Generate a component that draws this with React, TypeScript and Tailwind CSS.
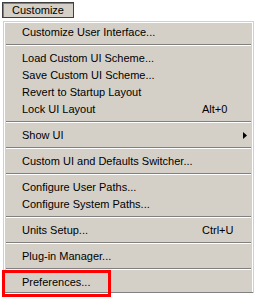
import React from "react"

type Entry = { label?: string; shortcut?: string; sub?: boolean; sep?: boolean }

const entries: Entry[] = [
    { label: "Customize User Interface..." },
    { sep: true },
    { label: "Load Custom UI Scheme..." },
    { label: "Save Custom UI Scheme..." },
    { label: "Revert to Startup Layout" },
    { label: "Lock UI Layout", shortcut: "Alt+0" },
    { sep: true },
    { label: "Show UI", sub: true },
    { sep: true },
    { label: "Custom UI and Defaults Switcher..." },
    { sep: true },
    { label: "Configure User Paths..." },
    { label: "Configure System Paths..." },
    { sep: true },
    { label: "Units Setup...", shortcut: "Ctrl+U" },
    { sep: true },
    { label: "Plug-in Manager..." },
    { sep: true },
    { label: "Preferences..." },
]

const App = () => {
    return (
        <div
            className="relative w-[254px] h-[297px] bg-white overflow-hidden text-[11px] text-black"
            style={{ fontFamily: '"Liberation Sans", Arial, sans-serif' }}
        >
            {/* pressed menu button */}
            <div className="ml-[2px] mt-[2px] w-[72px] h-[16px] border border-[#404040] bg-[#d4d0c8] shadow-[inset_1px_1px_0_#808080] flex items-center justify-center leading-none">
                Customize
            </div>

            {/* dropdown */}
            <div className="ml-[3px] mt-[3px] w-[251px] bg-[#d4d0c8] border-l border-t border-[#d4d0c8]">
                <div className="w-[249px] border-l border-t border-r border-white pt-[1px] pb-[1px]">
                    {entries.map((e, i) =>
                        e.sep ? (
                            <div key={i} className="h-[9px] pt-[3px] pl-[1px] pr-[1px]">
                                <div className="h-px bg-[#808080]"></div>
                                <div className="h-px bg-white"></div>
                            </div>
                        ) : (
                            <div key={i} className="h-[17px] flex items-center pl-[17px] leading-none">
                                <span className="flex-1 whitespace-nowrap">{e.label}</span>
                                {e.shortcut && <span className="w-[50px] whitespace-nowrap">{e.shortcut}</span>}
                                {e.sub && (
                                    <svg width="4" height="7" viewBox="0 0 4 7" className="mr-[5px]">
                                        <path d="M0 0 L4 3.5 L0 7 Z" fill="#000" />
                                    </svg>
                                )}
                            </div>
                        )
                    )}
                </div>
                <div className="h-px bg-[#808080] w-[249px]"></div>
            </div>

            {/* highlight box */}
            <div className="absolute left-[2px] top-[270px] w-[109px] h-[27px] border-[3px] border-[#ff0000]"></div>
        </div>
    )
}

export default App
